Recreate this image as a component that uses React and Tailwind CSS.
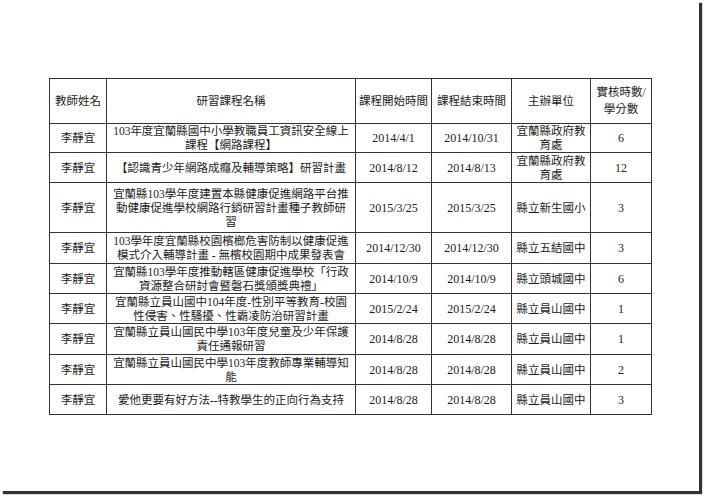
const FONT = "font-['Liberation_Serif','Noto_Sans_CJK_TC',serif]";

const rows = [
  { h: 29, course: ['103年度宜蘭縣國中小學教職員工資訊安全線上', '課程【網路課程】'], start: '2014/4/1', end: '2014/10/31', org: ['宜蘭縣政府教', '育處'], hours: '6' },
  { h: 30, course: ['【認識青少年網路成癮及輔導策略】研習計畫'], start: '2014/8/12', end: '2014/8/13', org: ['宜蘭縣政府教', '育處'], hours: '12' },
  { h: 50, course: ['宜蘭縣103學年度建置本縣健康促進網路平台推', '動健康促進學校網路行銷研習計畫種子教師研', '習'], start: '2015/3/25', end: '2015/3/25', org: ['縣立新生國小'], hours: '3' },
  { h: 31, course: ['103學年度宜蘭縣校園檳榔危害防制以健康促進', '模式介入輔導計畫 - 無檳校園期中成果發表會'], start: '2014/12/30', end: '2014/12/30', org: ['縣立五結國中'], hours: '3' },
  { h: 30, course: ['宜蘭縣103學年度推動轄區健康促進學校「行政', '資源整合研討會暨磐石獎頒獎典禮」'], start: '2014/10/9', end: '2014/10/9', org: ['縣立頭城國中'], hours: '6' },
  { h: 30, course: ['宜蘭縣立員山國中104年度-性別平等教育-校園', '性侵害、性騷擾、性霸凌防治研習計畫'], start: '2015/2/24', end: '2015/2/24', org: ['縣立員山國中'], hours: '1' },
  { h: 31, course: ['宜蘭縣立員山國民中學103年度兒童及少年保護', '責任通報研習'], start: '2014/8/28', end: '2014/8/28', org: ['縣立員山國中'], hours: '1' },
  { h: 30, course: ['宜蘭縣立員山國民中學103年度教師專業輔導知', '能'], start: '2014/8/28', end: '2014/8/28', org: ['縣立員山國中'], hours: '2' },
  { h: 30, course: ['愛他更要有好方法--特教學生的正向行為支持'], start: '2014/8/28', end: '2014/8/28', org: ['縣立員山國中'], hours: '3' },
];

function Lines({ items }) {
  return items.map((t, i) => (
    <div key={i} className="whitespace-nowrap">{t}</div>
  ));
}

export default function App() {
  const cell = 'border border-[#333] text-center align-middle p-0';
  return (
    <div className={`w-[704px] h-[498px] bg-white overflow-hidden ${FONT} text-[#1c1c1c]`}>
      <div className="w-[699px] h-[491px] bg-white shadow-[3px_3px_1px_rgba(0,0,0,0.8)] pt-[78px] pl-[49px]">
        <table className="border-collapse table-fixed w-[602px] text-[12px] leading-[14px]">
          <colgroup>
            <col className="w-[57px]" />
            <col className="w-[249px]" />
            <col className="w-[76px]" />
            <col className="w-[80px]" />
            <col className="w-[79px]" />
            <col className="w-[61px]" />
          </colgroup>
          <thead>
            <tr className="h-[45px] text-[11.5px] leading-[17px]">
              <th className={`${cell} font-normal`}>教師姓名</th>
              <th className={`${cell} font-normal`}>研習課程名稱</th>
              <th className={`${cell} font-normal`}>課程開始時間</th>
              <th className={`${cell} font-normal`}>課程結束時間</th>
              <th className={`${cell} font-normal`}>主辦單位</th>
              <th className={`${cell} font-normal`}>
                <div>實核時數/</div>
                <div>學分數</div>
              </th>
            </tr>
          </thead>
          <tbody>
            {rows.map((r, i) => (
              <tr key={i} style={{ height: r.h }}>
                <td className={`${cell} text-[11.5px]`}>李靜宜</td>
                <td className={`${cell} px-1 text-[11.5px]`}><Lines items={r.course} /></td>
                <td className={`${cell}`}>{r.start}</td>
                <td className={`${cell}`}>{r.end}</td>
                <td className={`${cell} text-[11.5px]`}><Lines items={r.org} /></td>
                <td className={`${cell}`}>{r.hours}</td>
              </tr>
            ))}
          </tbody>
        </table>
      </div>
    </div>
  );
}
